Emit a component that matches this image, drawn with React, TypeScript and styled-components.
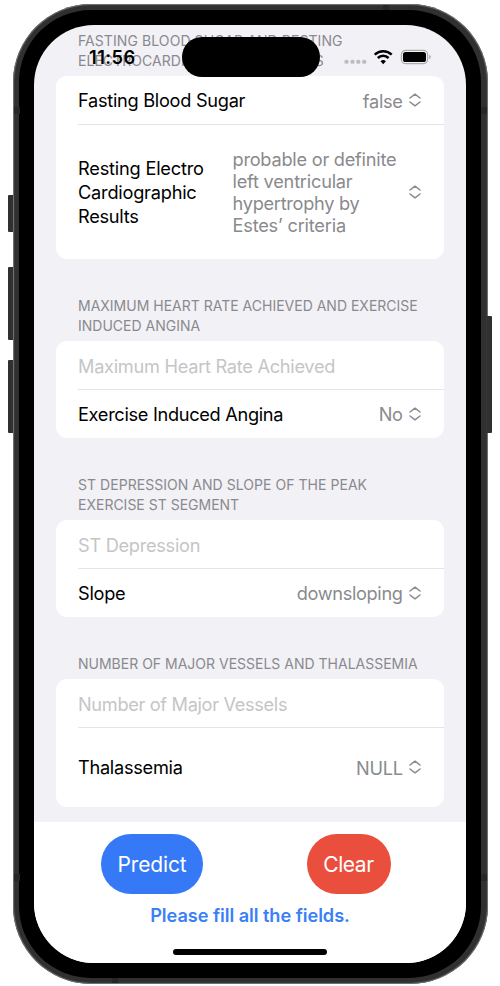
import React from "react";
import styled, { createGlobalStyle } from "styled-components";

const GlobalStyle = createGlobalStyle`
  * { box-sizing: border-box; }
  body { margin: 0; background: #fff; font-family: Inter, "Liberation Sans", sans-serif; }
`;

const Stage = styled.main`
  width: 500px;
  height: 986px;
  overflow: hidden;
  padding: 3.5px 12.5px 2px;
`;

const Phone = styled.div`
  position: relative;
  width: 475px;
  height: 980.5px;
  padding: 6.5px;
  border-radius: 78px;
  background: #303031;
  box-shadow: inset 0 0 1px 1px #777;
`;

const Bezel = styled.div`
  height: 100%;
  padding: 14.5px 15px;
  border-radius: 72px;
  background: #000;
`;

const SideKey = styled.span<{ $top: number; $height: number; $right?: boolean }>`
  position: absolute;
  top: ${(p) => p.$top}px;
  ${(p) => (p.$right ? "right: -4.5px;" : "left: -5px;")}
  width: 5px;
  height: ${(p) => p.$height}px;
  border-radius: ${(p) => (p.$right ? "0 1px 1px 0" : "1px 0 0 1px")};
  background: #303031;
`;

const AntennaBand = styled.span<{ $x: "left" | "right"; $y: "top" | "bottom"; $flat?: boolean }>`
  position: absolute;
  ${(p) => p.$x}: ${(p) => (p.$flat ? 99 : 1)}px;
  ${(p) => p.$y}: ${(p) => (p.$flat ? 1 : 103)}px;
  width: 6px;
  height: ${(p) => (p.$flat ? 5.5 : 7)}px;
  background: #272728;
`;

const Screen = styled.div`
  position: relative;
  display: flex;
  flex-direction: column;
  height: 100%;
  overflow: hidden;
  border-radius: 60px;
  background: #f2f1f6;
`;

const StatusBar = styled.div`
  position: absolute;
  inset: 0 0 auto;
  height: 65px;
  display: flex;
  align-items: center;
  padding: 0 36px 0 55px;
`;

const Clock = styled.time`
  width: 93px;
  font-size: 18.3px;
  font-weight: 600;
  letter-spacing: 0.4px;
  color: #000;
`;

const Island = styled.div`
  width: 138px;
  height: 40.5px;
  border-radius: 21px;
  background: #000;
`;

const StatusIcons = styled.div`
  display: flex;
  margin: -1px -2px 0 auto;
  svg { display: block; }
`;

const Form = styled.div`
  display: flex;
  flex-direction: column;
  gap: 37px;
  height: 797.5px;
  padding: 6.5px 22px 0;
`;

const SectionTitle = styled.h2`
  margin: 0;
  padding: 0 0 5px 22px;
  font-size: 14px;
  font-weight: 400;
  line-height: 20px;
  color: #8a8a8e;
  white-space: nowrap;
`;

const Line = styled.span<{ $track?: number }>`
  display: block;
  ${(p) => p.$track !== undefined && `letter-spacing: ${p.$track}px;`}
`;

const Card = styled.div`
  border-radius: 11px;
  background: #fff;
`;

const Row = styled.div<{ $height?: number }>`
  position: relative;
  display: flex;
  align-items: center;
  justify-content: space-between;
  height: ${(p) => p.$height ?? 48.5}px;
  padding: 0.5px 23px 0 22px;
  font-size: 18.2px;
  letter-spacing: -0.28px;
  white-space: nowrap;

  &:not(:last-child)::after {
    content: "";
    position: absolute;
    inset: auto 0 0 22px;
    height: 1px;
    background: #e4e4e6;
  }
`;

const Label = styled.span`
  line-height: 24.3px;
  color: #000;
`;

const Placeholder = styled.span`
  color: #c5c5c7;
`;

const Picker = styled.span<{ $wide?: boolean }>`
  display: flex;
  align-items: center;
  justify-content: space-between;
  gap: 6.3px;
  width: ${(p) => (p.$wide ? "188.5px" : "auto")};
  line-height: 22px;
  color: #8a8a8e;
  svg { display: block; flex: none; margin-top: -0.5px; }
`;

const Footer = styled.footer`
  flex: 1;
  display: flex;
  flex-direction: column;
  align-items: center;
  padding-top: 12px;
  background: #fff;
`;

const Actions = styled.div`
  display: flex;
  justify-content: space-between;
  width: 289.5px;
  margin-right: 8.5px;
`;

const Pill = styled.button<{ $color: string; $width: number; $track: number }>`
  width: ${(p) => p.$width}px;
  height: 59.5px;
  padding: 1px 0 0;
  border: 0;
  border-radius: 30px;
  background: ${(p) => p.$color};
  color: #fff;
  font: 400 21px Inter, sans-serif;
  letter-spacing: ${(p) => p.$track}px;
`;

const Message = styled.p`
  margin: 9px 0 0;
  font-size: 18.2px;
  font-weight: 600;
  line-height: 24px;
  letter-spacing: -0.06px;
  color: #3a80f7;
`;

const HomeIndicator = styled.div`
  width: 154.5px;
  height: 5.5px;
  margin-top: 22.5px;
  border-radius: 3px;
  background: #000;
`;

const Chevrons = () => (
  <svg width="12" height="14" viewBox="0 0 12 14" fill="none" stroke="#8a8a8e" strokeWidth="1.5" strokeLinecap="round" strokeLinejoin="round">
    <path d="M1 5 6 1.2 11 5M1 9l5 3.8L11 9" />
  </svg>
);

const Signals = () => (
  <svg width="88" height="16" viewBox="0 0 88 16">
    <g fill="#bdbdc1">
      <rect x="0.5" y="10.8" width="4" height="4" rx="1.5" />
      <rect x="6.5" y="10.8" width="4" height="4" rx="1.5" />
      <rect x="12.3" y="10.8" width="4" height="4" rx="1.5" />
      <rect x="18.2" y="10.8" width="4" height="4" rx="1.5" />
    </g>
    <g fill="none" stroke="#000" strokeWidth="2.5">
      <path d="M30.7 5.7a12.2 12.2 0 0 1 17 0" />
      <path d="M33.8 9a7.7 7.7 0 0 1 10.8 0" />
    </g>
    <path d="M36.5 12.2a4 4 0 0 1 5.4 0L39.2 15.2Z" fill="#000" />
    <rect x="57.4" y="1.4" width="26.2" height="13.2" rx="4" fill="none" stroke="#acacb0" strokeWidth="1.2" />
    <rect x="59" y="3" width="23" height="10" rx="2.6" fill="#000" />
    <path d="M85.2 6.1c2.2.7 2.2 3.3 0 4Z" fill="#acacb0" />
  </svg>
);

type Text = [string, number?];
type Field = { label: Text[]; value?: Text[]; height?: number };
type Section = { title: Text[]; fields: Field[] };

const sections: Section[] = [
  {
    title: [["FASTING BLOOD SUGAR AND RESTING", 0.08], ["ELECTROCARDIOGRAPHIC RESULTS", 0.04]],
    fields: [
      { label: [["Fasting Blood Sugar"]], value: [["false"]] },
      {
        label: [["Resting Electro", -0.2], ["Cardiographic", -0.22], ["Results"]],
        value: [["probable or definite", -0.24], ["left ventricular", -0.22], ["hypertrophy by"], ["Estes’ criteria", -0.2]],
        height: 134.5,
      },
    ],
  },
  {
    title: [["MAXIMUM HEART RATE ACHIEVED AND EXERCISE"], ["INDUCED ANGINA"]],
    fields: [
      { label: [["Maximum Heart Rate Achieved"]] },
      { label: [["Exercise Induced Angina", -0.31]], value: [["No"]] },
    ],
  },
  {
    title: [["ST DEPRESSION AND SLOPE OF THE PEAK", 0.04], ["EXERCISE ST SEGMENT"]],
    fields: [{ label: [["ST Depression"]] }, { label: [["Slope"]], value: [["downsloping", -0.33]] }],
  },
  {
    title: [["NUMBER OF MAJOR VESSELS AND THALASSEMIA"]],
    fields: [
      { label: [["Number of Major Vessels", -0.33]] },
      { label: [["Thalassemia"]], value: [["NULL"]], height: 79.5 },
    ],
  },
];

const Lines = ({ of }: { of: Text[] }) => (
  <>
    {of.map(([text, track]) => (
      <Line key={text} $track={track}>{text}</Line>
    ))}
  </>
);

export default function App() {
  return (
    <Stage>
      <GlobalStyle />
      <Phone>
        <SideKey $top={191} $height={37} />
        <SideKey $top={263} $height={73} />
        <SideKey $top={356} $height={73.5} />
        <SideKey $top={312} $height={117.5} $right />
        <AntennaBand $x="left" $y="top" />
        <AntennaBand $x="right" $y="top" />
        <AntennaBand $x="left" $y="bottom" />
        <AntennaBand $x="right" $y="bottom" />
        <AntennaBand $x="right" $y="top" $flat />
        <AntennaBand $x="left" $y="bottom" $flat />
        <Bezel>
          <Screen>
            <Form>
              {sections.map((section) => (
                <section key={section.title[0][0]}>
                  <SectionTitle><Lines of={section.title} /></SectionTitle>
                  <Card>
                    {section.fields.map((field) => (
                      <Row key={field.label[0][0]} $height={field.height}>
                        {field.value ? (
                          <>
                            <Label><Lines of={field.label} /></Label>
                            <Picker $wide={field.value.length > 1}>
                              <span><Lines of={field.value} /></span>
                              <Chevrons />
                            </Picker>
                          </>
                        ) : (
                          <Placeholder><Lines of={field.label} /></Placeholder>
                        )}
                      </Row>
                    ))}
                  </Card>
                </section>
              ))}
            </Form>
            <Footer>
              <Actions>
                <Pill $color="#3679f6" $width={102} $track={-0.15}>Predict</Pill>
                <Pill $color="#ea4f3e" $width={84} $track={-0.45}>Clear</Pill>
              </Actions>
              <Message>Please fill all the fields.</Message>
              <HomeIndicator />
            </Footer>
            <StatusBar>
              <Clock>11:56</Clock>
              <Island />
              <StatusIcons><Signals /></StatusIcons>
            </StatusBar>
          </Screen>
        </Bezel>
      </Phone>
    </Stage>
  );
}
